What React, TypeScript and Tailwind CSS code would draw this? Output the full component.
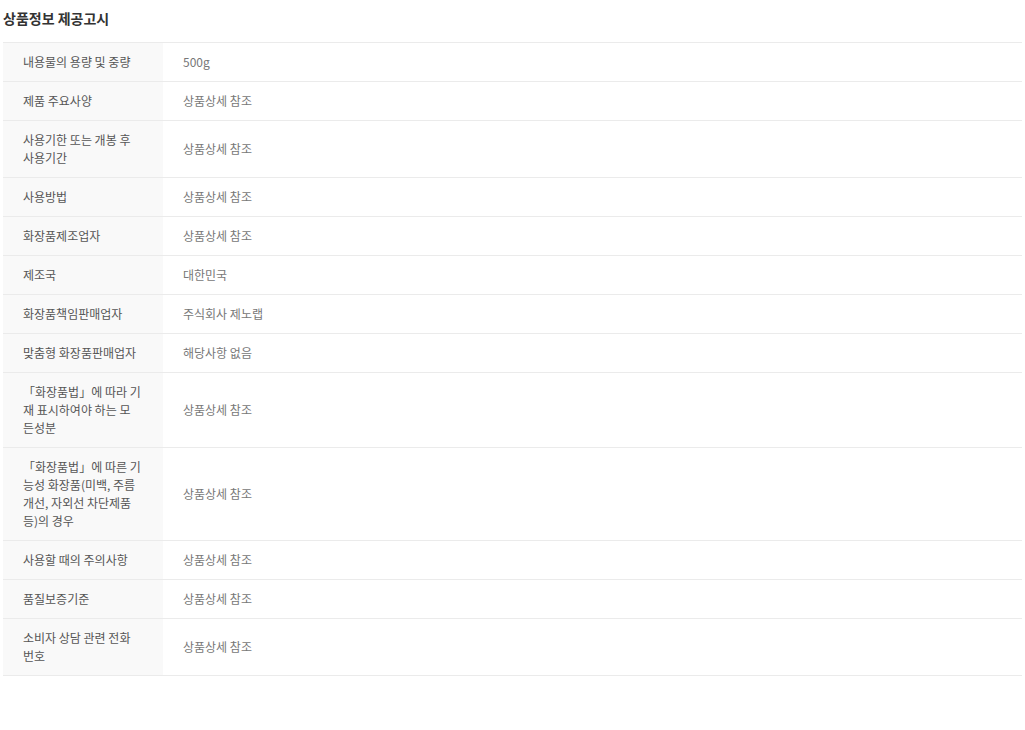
const ROWS: [string, string][] = [
  ['내용물의 용량 및 중량', '500g'],
  ['제품 주요사양', '상품상세 참조'],
  ['사용기한 또는 개봉 후 사용기간', '상품상세 참조'],
  ['사용방법', '상품상세 참조'],
  ['화장품제조업자', '상품상세 참조'],
  ['제조국', '대한민국'],
  ['화장품책임판매업자', '주식회사 제노랩'],
  ['맞춤형 화장품판매업자', '해당사항 없음'],
  ['「화장품법」에 따라 기재 표시하여야 하는 모든성분', '상품상세 참조'],
  ['「화장품법」에 따른 기능성 화장품(미백, 주름개선, 자외선 차단제품 등)의 경우', '상품상세 참조'],
  ['사용할 때의 주의사항', '상품상세 참조'],
  ['품질보증기준', '상품상세 참조'],
  ['소비자 상담 관련 전화번호', '상품상세 참조'],
]

export default function App() {
  return (
    <div className="min-h-[730px] bg-white pl-[3px] pr-[3px] font-['Noto_Sans_CJK_KR','Noto_Sans',sans-serif]">
      <h2 className="pt-[8px] pb-[14px] text-[14px] font-bold leading-[20px] text-[#333]">상품정보 제공고시</h2>
      <table className="w-full border-collapse border-t border-[#ebebeb] text-[12px] leading-[18px]">
        <tbody>
          {ROWS.map(([label, value]) => (
            <tr key={label} className="border-b border-[#ebebeb]">
              <th className="w-[160px] break-all bg-[#f9f9f9] py-[10px] pl-[20px] pr-[22px] text-left align-middle font-normal text-[#555]">
                {label}
              </th>
              <td className="py-[10px] pl-[20px] pr-[20px] align-middle text-[#777]">{value}</td>
            </tr>
          ))}
        </tbody>
      </table>
    </div>
  )
}
